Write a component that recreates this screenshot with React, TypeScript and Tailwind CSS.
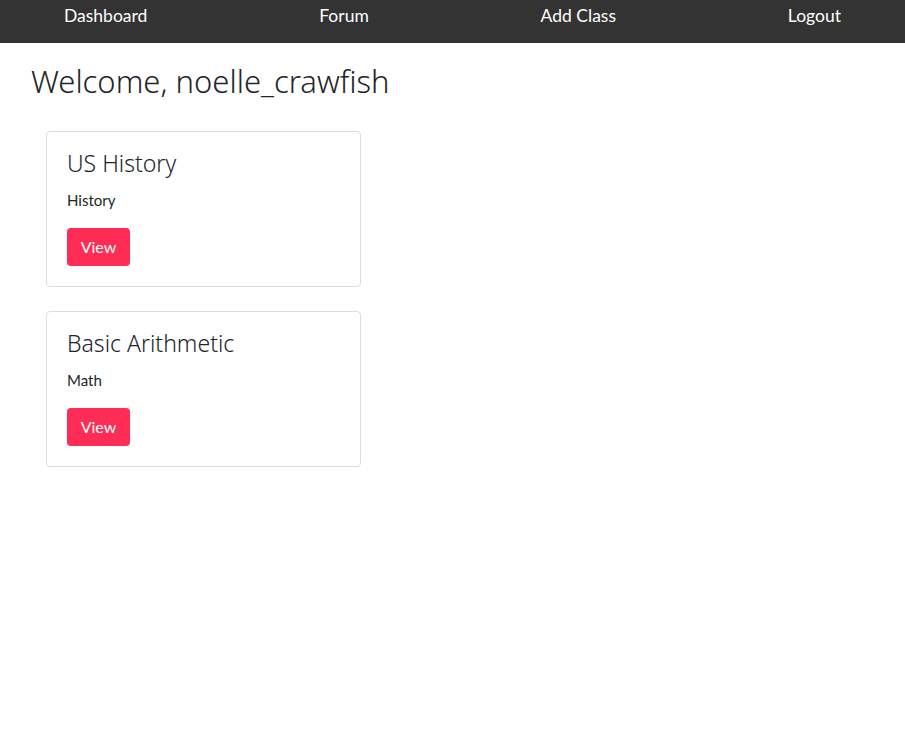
import React from 'react';

const classes = [
  { title: 'US History', subject: 'History' },
  { title: 'Basic Arithmetic', subject: 'Math' },
];

const navLinks = ['Dashboard', 'Forum', 'Add Class', 'Logout'];

const App: React.FC = () => {
  return (
    <div className="min-h-screen bg-white text-[#212529]" style={{ fontFamily: 'Lato, "Noto Sans", sans-serif' }}>
      {/* Navbar */}
      <nav className="h-[43px] bg-[#333333] flex items-center justify-between px-16">
        {navLinks.map((link) => (
          <a key={link} href="#" className="text-white text-[17.5px] leading-none -mt-[11px]">
            {link}
          </a>
        ))}
      </nav>

      <main className="px-[31px] pt-[19px]">
        <h1 className="text-[31px] leading-[38px] font-light text-[#212529]" style={{ fontFamily: '"Noto Sans", Lato, sans-serif' }}>
          Welcome, noelle_crawfish
        </h1>

        <div className="ml-[15px] mt-[31px] flex flex-col gap-6">
          {classes.map((c) => (
            <div key={c.title} className="w-[315px] h-[156px] border border-[#dcdcdc] rounded-[4px] px-5 pt-[18px]">
              <h3 className="text-[23px] leading-[26px] font-light text-[#212529]" style={{ fontFamily: '"Noto Sans", Lato, sans-serif' }}>
                {c.title}
              </h3>
              <p className="text-[15px] leading-[20px] mt-[14px]">{c.subject}</p>
              <button className="mt-[18px] h-[38px] w-[63px] rounded-[4px] bg-[#ff2d55] text-white text-[16px]">
                View
              </button>
            </div>
          ))}
        </div>
      </main>
    </div>
  );
};

export default App;
